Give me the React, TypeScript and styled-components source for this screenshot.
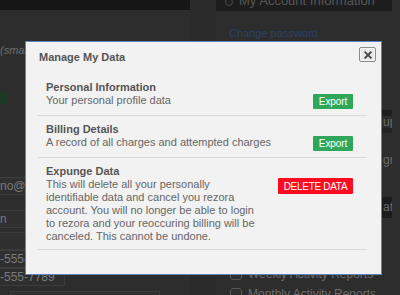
import styled, { createGlobalStyle } from 'styled-components';

const GlobalStyle = createGlobalStyle`
  html, body {
    margin: 0;
    padding: 0;
    background: #2d2d2d;
    overflow: hidden;
  }
  body {
    font-family: "Liberation Sans", Helvetica, Arial, sans-serif;
  }
`;

const Page = styled.div`
  position: relative;
  width: 400px;
  height: 295px;
  overflow: hidden;
  display: grid;
  grid-template-columns: 190px 26px 176px 8px;
  background: #2d2d2d;
`;

const LeftCol = styled.div`
  display: flex;
  flex-direction: column;
  overflow: hidden;
`;

const TopBar = styled.div`
  height: 10px;
  background: #161616;
  flex-shrink: 0;
`;

const Hint = styled.div`
  margin-top: 34px;
  font-size: 11px;
  line-height: 13px;
  font-style: italic;
  color: #6e6e6e;
`;

const SaveStub = styled.div`
  flex-shrink: 0;
  margin-top: 35px;
  width: 7px;
  height: 12px;
  background: #1c3a23;
  border-radius: 0 2px 2px 0;
`;

const Field = styled.div<{ $w?: number; $mt: number }>`
  flex-shrink: 0;
  width: ${({ $w }) => $w ?? 90}px;
  height: 18px;
  margin: ${({ $mt }) => $mt}px 0 0 -10px;
  padding-left: 10px;
  box-sizing: border-box;
  border: 1px solid #3c3c3c;
  border-left: none;
  background: #2f2f2f;
  font-size: 12px;
  line-height: 16px;
  color: #7a7a7a;
  white-space: nowrap;
  overflow: hidden;
`;

const Wide = styled.div`
  flex-shrink: 0;
  margin: 5px 0 0 10px;
  width: 150px;
  height: 14px;
  border: 1px solid #3c3c3c;
  background: #303030;
  font-size: 12px;
  line-height: 18px;
  color: #777;
  padding-left: 8px;
  box-sizing: border-box;
  overflow: hidden;
`;

const Gutter = styled.div`
  background: #2a2a2a;
`;

const RightCol = styled.div`
  display: flex;
  flex-direction: column;
`;

const PanelHead = styled.div`
  flex-shrink: 0;
  height: 11px;
  background: #1d1d1d;
  display: flex;
  align-items: flex-end;
  gap: 6px;
  padding-left: 9px;
  overflow: hidden;
  font-size: 13px;
  line-height: 14px;
  color: #575757;
  white-space: nowrap;
`;

const HeadText = styled.span`
  margin-bottom: 3.5px;
`;

const HeadIcon = styled.span`
  width: 6px;
  height: 6px;
  border: 1px solid #4a4a4a;
  border-radius: 50%;
  margin-bottom: 5px;
`;

const LinkText = styled.div`
  margin: 16px 0 0 13px;
  font-size: 11px;
  line-height: 13px;
  color: #2c4068;
`;

const Band = styled.div<{ $h: number; $bg: string; $mt?: number }>`
  flex-shrink: 0;
  height: ${({ $h }) => $h}px;
  margin-top: ${({ $mt }) => $mt ?? 0}px;
  margin-right: -8px;
  background: ${({ $bg }) => $bg};
  font-size: 12px;
  line-height: ${({ $h }) => $h}px;
  color: #6a6a6a;
  padding-left: 167px;
  white-space: nowrap;
  overflow: hidden;
`;

const Checks = styled.div`
  margin-top: auto;
  margin-bottom: -9px;
`;

const CheckRow = styled.div`
  display: flex;
  align-items: center;
  gap: 6px;
  margin-left: 14px;
  font-size: 12px;
  color: #6a6a6a;
  height: 20px;
  white-space: nowrap;
`;

const Box = styled.span`
  width: 10px;
  height: 10px;
  border: 1px solid #555;
  border-radius: 3px;
  background: #2f2f2f;
`;

const Edge = styled.div`
  background: #2d2d2d;
`;

/* modal */

const Modal = styled.div`
  position: absolute;
  left: 25px;
  top: 41px;
  width: 357px;
  height: 234px;
  box-sizing: border-box;
  background: #f2f2f2;
  border: 1px solid #5a84c2;
  display: flex;
  flex-direction: column;
`;

const Header = styled.div`
  height: 32px;
  display: flex;
  justify-content: space-between;
  align-items: flex-start;
  padding: 8px 5px 0 13px;
  box-sizing: border-box;
`;

const Title = styled.h2`
  margin: 0;
  font-size: 11px;
  line-height: 14px;
  font-weight: bold;
  color: #555;
`;

const Close = styled.button`
  margin-top: -3px;
  width: 17px;
  height: 15px;
  padding: 0;
  display: flex;
  align-items: center;
  justify-content: center;
  border: 1px solid #8c8c8c;
  border-radius: 2px;
  background: #e9e9e9;
  box-shadow: inset 0 0 0 1px #f6f6f6;
`;

const List = styled.div`
  margin: 0 14px 0 12px;
`;

const Section = styled.div`
  padding: 7px 14px 6px 8px;
  border-bottom: 1px solid #d9d9d9;
`;

const SectionTitle = styled.div`
  font-size: 11px;
  line-height: 13px;
  font-weight: bold;
  color: #555;
`;

const Row = styled.div`
  display: flex;
  justify-content: space-between;
  align-items: flex-start;
`;

const Desc = styled.div<{ $w?: number }>`
  width: ${({ $w }) => ($w ? `${$w}px` : 'auto')};
  font-size: 11px;
  line-height: 13px;
  color: #666;
`;

const Action = styled.button<{ $danger?: boolean }>`
  flex-shrink: 0;
  width: ${({ $danger }) => ($danger ? 75 : 40)}px;
  height: ${({ $danger }) => ($danger ? 16 : 15)}px;
  padding: 0;
  border: none;
  border-radius: 1px;
  background: ${({ $danger }) => ($danger ? '#ff0a1f' : '#2ea75a')};
  color: #fff;
  font-family: "Liberation Sans", Helvetica, Arial, sans-serif;
  font-size: 10px;
  letter-spacing: ${({ $danger }) => ($danger ? '-0.3px' : '-0.1px')};
  line-height: 15px;
  text-align: center;
`;

export default function App() {
  return (
    <>
      <GlobalStyle />
      <Page>
        <LeftCol>
          <TopBar />
          <Hint>(small</Hint>
          <SaveStub />
          <Field $mt={73}>no@rezora.com</Field>
          <Field $mt={15}>n</Field>
          <Field $mt={4} />
          <Field $mt={0}>-555-1234</Field>
          <Field $mt={0} $w={75}>-555-7789</Field>
          <Wide>Realtor</Wide>
        </LeftCol>
        <Gutter />
        <RightCol>
          <PanelHead>
            <HeadIcon />
            <HeadText>My Account Information</HeadText>
          </PanelHead>
          <LinkText>Change password</LinkText>
          <Band $h={6} $bg="#1e1e1e" $mt={70} />
          <Band $h={12} $bg="#2d2d2d">up</Band>
          <Band $h={5} $bg="#232323" />
          <Band $h={20} $bg="#2d2d2d" $mt={17}>grou</Band>
          <Band $h={21} $bg="#1c1c1c" $mt={27}>ation</Band>
          <Checks>
            <CheckRow>
              <Box />
              Weekly Activity Reports
            </CheckRow>
            <CheckRow>
              <Box />
              Monthly Activity Reports
            </CheckRow>
          </Checks>
        </RightCol>
        <Edge />

        <Modal>
          <Header>
            <Title>Manage My Data</Title>
            <Close aria-label="Close">
              <svg width="8" height="8" viewBox="0 0 8 8">
                <path d="M1.3 1.3 L6.7 6.7 M6.7 1.3 L1.3 6.7" stroke="#444" strokeWidth="1.9" strokeLinecap="square" />
              </svg>
            </Close>
          </Header>
          <List>
            <Section>
              <SectionTitle>Personal Information</SectionTitle>
              <Row>
                <Desc>Your personal profile data</Desc>
                <Action>Export</Action>
              </Row>
            </Section>
            <Section>
              <SectionTitle>Billing Details</SectionTitle>
              <Row>
                <Desc>A record of all charges and attempted charges</Desc>
                <Action>Export</Action>
              </Row>
            </Section>
            <Section>
              <SectionTitle>Expunge Data</SectionTitle>
              <Row>
                <Desc $w={210}>
                  This will delete all your personally identifiable data and cancel you rezora
                  account. You will no longer be able to login to rezora and your reoccuring
                  billing will be canceled. This cannot be undone.
                </Desc>
                <Action $danger>DELETE DATA</Action>
              </Row>
            </Section>
          </List>
        </Modal>
      </Page>
    </>
  );
}
